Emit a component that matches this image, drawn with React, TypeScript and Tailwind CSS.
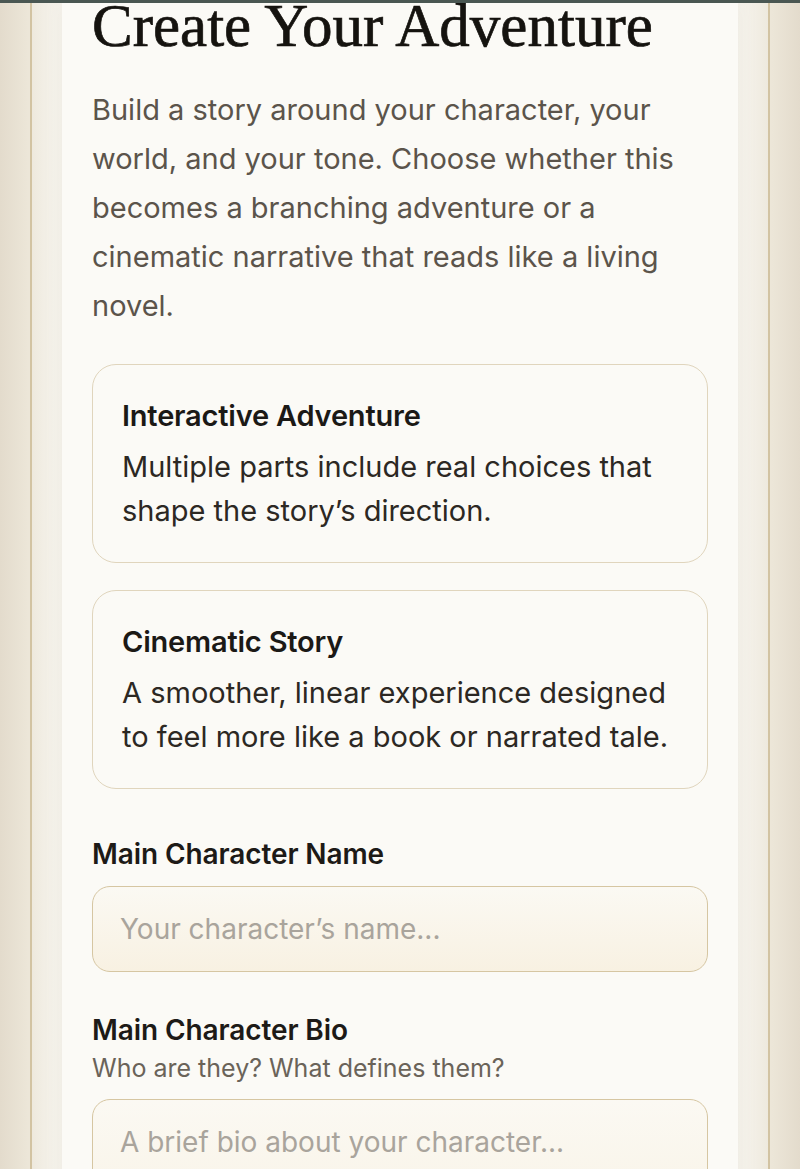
import React from "react";

function ModeCard({ title, desc }: { title: string; desc: string }) {
  return (
    <div className="rounded-[24px] border-[1.5px] border-[#e0d5bd] bg-[#fbfaf6] px-[29px] py-[29px]">
      <div className="text-[29px] font-semibold leading-[44px] tracking-[-0.2px] text-[#1b1916]">{title}</div>
      <div className="mt-[7px] text-[29px] leading-[44px] text-[#2c2823]">{desc}</div>
    </div>
  );
}

export default function App() {
  return (
    <div
      className="h-[1169px] overflow-hidden border-t-[3px] border-[#4a5752] bg-[linear-gradient(90deg,#e3dbcc,#ece6d8_28px,#ece6d8_calc(100%-28px),#e3dbcc)] flex justify-center"
      style={{ fontFamily: "Inter, 'Noto Sans', sans-serif" }}
    >
      <div className="w-[740px] min-h-[1200px] border-x-2 border-[#d2c3a2] bg-[linear-gradient(90deg,#eee9dd,#f8f6f1_30px,#f8f6f1_calc(100%-30px),#eee9dd)] px-[30px]">
        <div className="min-h-[1200px] bg-[#fbfaf6] px-[30px] shadow-[0_0_18px_rgba(150,130,90,0.12)]">
          <h1
            className="mt-[-7px] text-[61px] leading-[60px] font-normal text-[#15130f] [-webkit-text-stroke:0.7px_#15130f]"
            style={{ fontFamily: "'Liberation Serif', serif" }}
          >
            Create Your Adventure
          </h1>
          <p className="mt-[29px] text-[29px] leading-[49px] text-[#5b544b]">
            Build a story around your character, your world, and your tone. Choose whether this
            becomes a branching adventure or a cinematic narrative that reads like a living novel.
          </p>

          <div className="mt-[34px] flex flex-col gap-[27px]">
            <ModeCard
              title="Interactive Adventure"
              desc="Multiple parts include real choices that shape the story’s direction."
            />
            <ModeCard
              title="Cinematic Story"
              desc="A smoother, linear experience designed to feel more like a book or narrated tale."
            />
          </div>

          <div className="mt-[47px]">
            <div className="text-[28px] font-semibold leading-[36px] tracking-[-0.1px] text-[#1d1a17]">
              Main Character Name
            </div>
            <div className="mt-[14px] flex h-[86px] items-center rounded-[18px] border-[1.5px] border-[#d6c6a2] bg-[linear-gradient(180deg,#fbf9f3,#f8f1e2)] px-[27px]">
              <span className="text-[28px] text-[#a9a49c]">Your character’s name...</span>
            </div>
          </div>

          <div className="mt-[40px]">
            <div className="text-[28px] font-semibold leading-[36px] tracking-[-0.1px] text-[#1d1a17]">
              Main Character Bio
            </div>
            <div className="mt-[4px] text-[25px] leading-[32px] text-[#6a6359]">
              Who are they? What defines them?
            </div>
            <div className="mt-[15px] h-[160px] rounded-[18px] border-[1.5px] border-[#d6c6a2] bg-[linear-gradient(180deg,#fbf9f3,#f8f1e2)] px-[27px] pt-[26px]">
              <span className="text-[28px] leading-[32px] text-[#a9a49c]">
                A brief bio about your character...
              </span>
            </div>
          </div>
        </div>
      </div>
    </div>
  );
}
